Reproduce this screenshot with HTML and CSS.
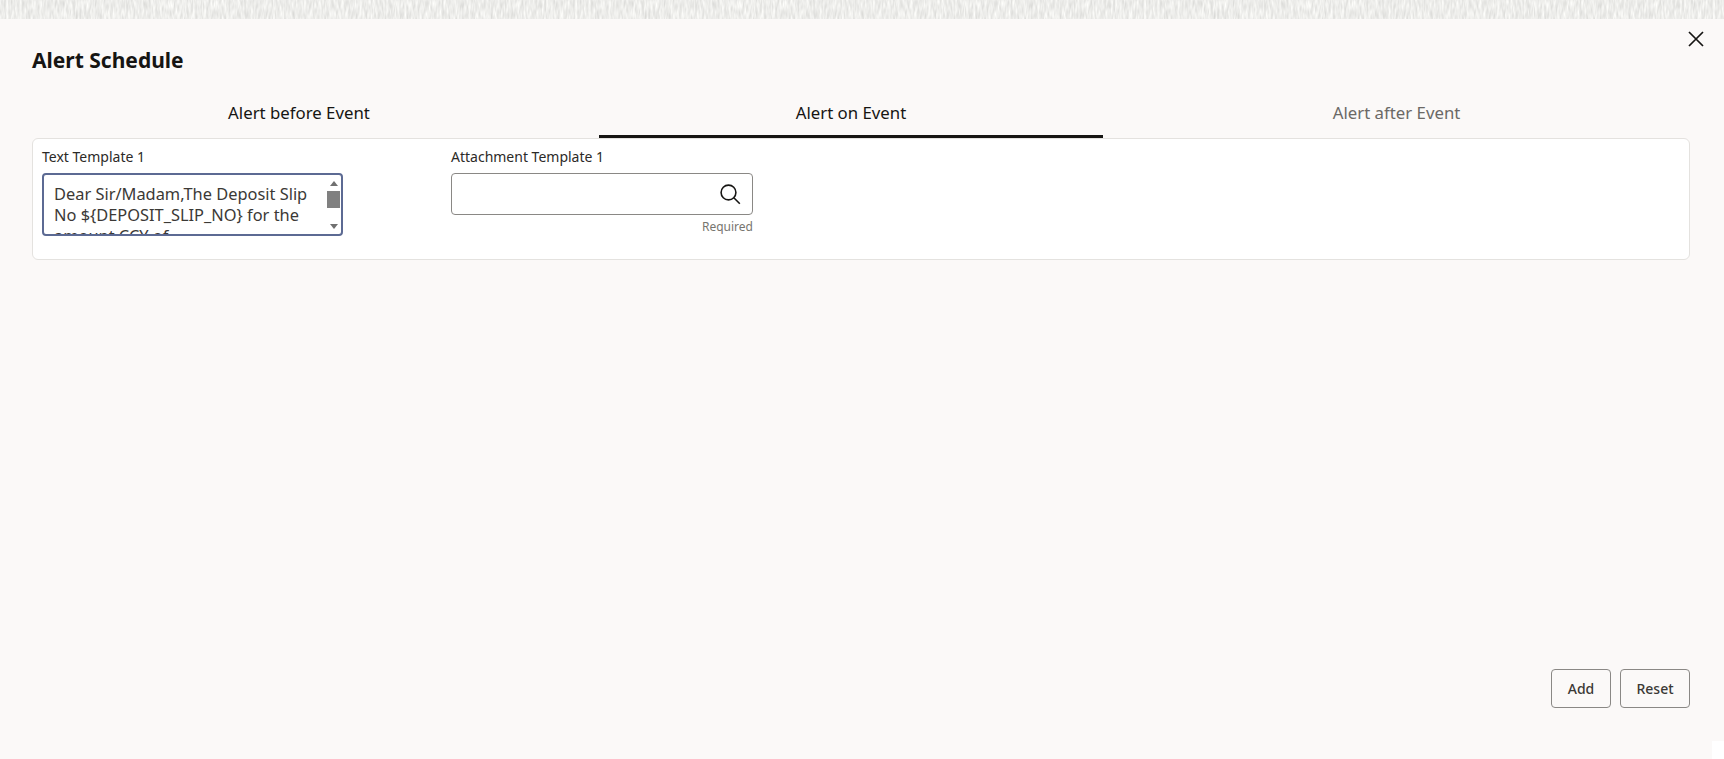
FILE: index.html
```html
<!DOCTYPE html>
<html lang="en">
<head>
<meta charset="utf-8">
<title>Alert Schedule</title>
<link rel="stylesheet" href="styles.css">
</head>
<body>
<div class="backdrop">
  <svg width="1724" height="19" aria-hidden="true">
    <filter id="grain" x="0" y="0" width="100%" height="100%" color-interpolation-filters="sRGB">
      <feTurbulence type="fractalNoise" baseFrequency="0.45 0.1" numOctaves="2" seed="4"/>
      <feColorMatrix values="0.2 0 0 0 0.83  0.2 0 0 0 0.83  0.2 0 0 0 0.82  0 0 0 0 1"/>
    </filter>
    <rect width="1724" height="19" filter="url(#grain)"/>
  </svg>
</div>
<div class="dialog">
  <header class="dialog-head">
    <h1 class="title">Alert Schedule</h1>
    <button class="close" aria-label="Close">
      <svg width="16" height="16" viewBox="0 0 16 16"><path d="M1 1l14 14M15 1L1 15" stroke="#161513" stroke-width="1.7" fill="none"/></svg>
    </button>
  </header>
  <nav class="tabs">
    <div class="tab">Alert before Event</div>
    <div class="tab tab-active">Alert on Event</div>
    <div class="tab tab-muted">Alert after Event</div>
  </nav>
  <section class="card">
    <div class="field field-text">
      <label class="label">Text Template 1</label>
      <div class="textarea">
        <div class="textarea-text">Dear Sir/Madam,The Deposit Slip No ${DEPOSIT_SLIP_NO} for the amount CCY of</div>
        <div class="scrollbar">
          <span class="arrow arrow-up"></span>
          <span class="thumb"></span>
          <span class="arrow arrow-down"></span>
        </div>
      </div>
    </div>
    <div class="field field-attach">
      <label class="label">Attachment Template 1</label>
      <div class="input">
        <svg width="22" height="22" viewBox="0 0 22 22"><circle cx="9.5" cy="9.5" r="7.4" stroke="#161513" stroke-width="1.6" fill="none"/><path d="M14.8 14.8l6 6" stroke="#161513" stroke-width="1.6" fill="none"/></svg>
      </div>
      <div class="hint">Required</div>
    </div>
  </section>
  <div class="spacer"></div>
  <footer class="actions">
    <button class="btn btn-add">Add</button>
    <button class="btn btn-reset">Reset</button>
  </footer>
</div>
<div class="corner"></div>
</body>
</html>
```
FILE: styles.css
```css
* { box-sizing: border-box; }
html, body { height: 100%; }
body {
  margin: 0;
  height: 759px;
  overflow: hidden;
  position: relative;
  font-family: "Noto Sans", "Open Sans", sans-serif;
  color: #161513;
  background: #fbf9f8;
}
.backdrop { height: 19px; overflow: hidden; }
.backdrop svg { display: block; }
.dialog {
  height: 740px;
  background: #fbf9f8;
  padding: 0 34px 0 32px;
  display: flex;
  flex-direction: column;
}
.dialog-head {
  display: flex;
  justify-content: space-between;
  height: 65px;
  align-items: flex-start;
}
.title {
  margin: 28px 0 0;
  font-size: 21px;
  line-height: 27px;
  font-weight: 700;
}
.close {
  border: 0;
  background: none;
  padding: 0;
  width: 16px;
  height: 16px;
  margin: 12px -14px 0 0;
  display: flex;
}
.tabs {
  display: grid;
  grid-template-columns: 534px 504px 1fr;
  column-gap: 33px;
  height: 54px;
}
.tab {
  text-align: center;
  font-size: 16.8px;
  line-height: 22px;
  padding-top: 18px;
  height: 54px;
}
.tab-active { border-bottom: 3px solid #161513; }
.tab-muted { color: #6b6966; margin-left: -33px; }
.card {
  background: #fff;
  border: 1px solid #e4e2df;
  border-radius: 6px;
  height: 122px;
  padding: 8px 9px;
  display: flex;
}
.label {
  display: block;
  font-size: 14px;
  line-height: 19px;
  color: #2c2a27;
}
.field-text { width: 301px; margin-right: 108px; }
.field-attach { width: 302px; }
.textarea {
  margin-top: 7px;
  height: 63px;
  border: 2px solid #5c6a93;
  border-radius: 4px;
  display: flex;
  overflow: hidden;
}
.textarea-text {
  flex: 1;
  padding: 8px 10px 0 10px;
  font-size: 16.4px;
  line-height: 21px;
  color: #3b3936;
}
.scrollbar {
  width: 13px;
  flex: none;
  margin-right: 1px;
  display: flex;
  flex-direction: column;
  align-items: center;
  padding-top: 6px;
}
.thumb { width: 13px; height: 17px; background: #808080; margin-top: 5px; }
.arrow { width: 0; height: 0; border-left: 4px solid transparent; border-right: 4px solid transparent; }
.arrow-up { border-bottom: 5px solid #707070; }
.arrow-down { border-top: 5px solid #707070; margin-top: 16px; }
.input {
  margin-top: 7px;
  height: 42px;
  border: 1px solid #8a8885;
  border-radius: 4px;
  display: flex;
  align-items: center;
  justify-content: flex-end;
  padding-right: 11px;
}
.hint {
  text-align: right;
  font-size: 12px;
  line-height: 16px;
  margin-top: 4px;
  color: #77756f;
}
.spacer { flex: 1; }
.actions {
  display: flex;
  justify-content: flex-end;
  gap: 9px;
  margin-bottom: 51px;
}
.btn {
  height: 39px;
  border: 1px solid #8a8885;
  border-radius: 4px;
  background: none;
  font-family: inherit;
  font-size: 14px;
  font-weight: 500;
  color: #3b3936;
  padding: 0;
}
.btn-add { width: 60px; }
.btn-reset { width: 70px; }
.corner {
  position: absolute;
  right: 0;
  bottom: 0;
  width: 12px;
  height: 18px;
  background: #fff;
}
```
